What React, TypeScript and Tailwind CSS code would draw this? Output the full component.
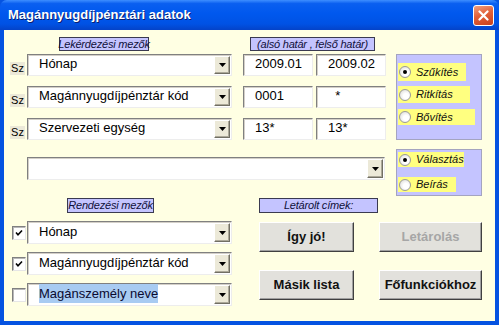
type ComboProps = { text?: string; className?: string; highlight?: boolean };

function DropArrow() {
  return (
    <div className="flex h-full w-[16px] items-center justify-center border border-t-white border-l-white border-b-[#716F64] border-r-[#716F64] bg-[#ECE9D8] shadow-[inset_-1px_-1px_0_#ACA899]">
      <svg width="7" height="4" viewBox="0 0 7 4">
        <path d="M0 0h7L3.5 4z" fill="#000" />
      </svg>
    </div>
  );
}

function Combo({ text, className = "", highlight }: ComboProps) {
  return (
    <div
      className={`flex items-stretch bg-white border border-t-[#808080] border-l-[#808080] border-b-[#EDEDED] border-r-[#EDEDED] p-[1px] shadow-[inset_1px_1px_0_#D4D0C8] ${className}`}
    >
      <div className="flex flex-1 items-center whitespace-nowrap pl-[10px] pb-[2px] text-[13px] text-black">
        {highlight ? <span className="bg-[#A8CBF2] text-[#0A0A30]">{text}</span> : text}
      </div>
      <DropArrow />
    </div>
  );
}

function Field({ text, className = "" }: { text: string; className?: string }) {
  return (
    <div
      className={`flex h-[22px] w-[70px] items-center bg-white pl-[11px] pb-[2px] text-[13px] text-black border border-t-[#808080] border-l-[#808080] border-b-[#EDEDED] border-r-[#EDEDED] shadow-[inset_1px_1px_0_#D4D0C8] ${className}`}
    >
      {text}
    </div>
  );
}

function Tag({ text, className = "" }: { text: string; className?: string }) {
  return (
    <div
      className={`flex items-center justify-center whitespace-nowrap border border-[#3A3A50] bg-[#C4C4FF] text-[11px] italic leading-none tracking-[-0.2px] text-[#10103A] ${className}`}
    >
      {text}
    </div>
  );
}

function Radio({ label, checked, className = "" }: { label: string; checked?: boolean; className?: string }) {
  return (
    <div className={`ml-[1px] flex items-center bg-[#FFFF80] ${className}`}>
      <span className="ml-[1px] flex h-[12px] w-[12px] items-center justify-center rounded-full border border-[#9A9A9A] bg-[radial-gradient(circle_at_60%_60%,#ffffff_30%,#D6D6D0)]">
        {checked && <span className="h-[4px] w-[4px] rounded-full bg-black" />}
      </span>
      <span className="ml-[5px] whitespace-nowrap text-[11px] italic leading-none text-[#101010]">{label}</span>
    </div>
  );
}

function Check({ checked }: { checked?: boolean }) {
  return (
    <div className="ml-[8px] flex h-[14px] w-[14px] items-center justify-center bg-white border border-t-[#808080] border-l-[#808080] border-b-[#E6E6E6] border-r-[#E6E6E6] shadow-[inset_1px_1px_0_#B8B8B8]">
      {checked && (
        <svg width="8" height="8" viewBox="0 0 8 8">
          <path d="M1 3.5 L3 5.8 L7 1.5" stroke="#000" strokeWidth="1.6" fill="none" />
        </svg>
      )}
    </div>
  );
}

function Btn({ text, className = "", disabled }: { text: string; className?: string; disabled?: boolean }) {
  return (
    <div
      className={`flex h-[30px] items-center justify-center bg-[#E2E1DC] border border-t-white border-l-white border-b-[#404040] border-r-[#404040] shadow-[inset_-1px_-1px_0_#A0A0A0] text-[13px] font-bold ${
        disabled ? "text-[#A6A6A6]" : "text-[#111]"
      } ${className}`}
    >
      {text}
    </div>
  );
}

const queryRows = [
  { label: "Hónap", a: "2009.01", b: "2009.02" },
  { label: "Magánnyugdíjpénztár kód", a: "0001", b: "  *" },
  { label: "Szervezeti egység", a: "13*", b: "13*" },
];

export default function App() {
  return (
    <div className="flex h-[325px] w-[499px] flex-col bg-[#0553E1] font-['Liberation_Sans',Arial,sans-serif]">
      {/* Title bar */}
      <div className="flex h-[30px] items-center rounded-t-[7px] bg-[linear-gradient(180deg,#3E8EFF_0%,#0A5FF0_12%,#0058EE_45%,#0052E4_80%,#0443C8_100%)] pl-[8px] pr-[5px]">
        <div className="flex-1 text-[13px] font-bold text-white [text-shadow:1px_1px_0_#0A1F70]">
          Magánnyugdíjpénztári adatok
        </div>
        <div className="flex h-[21px] w-[21px] items-center justify-center rounded-[3px] border border-white bg-[linear-gradient(160deg,#F0A080_0%,#E2603A_45%,#C8401C_100%)]">
          <svg width="11" height="11" viewBox="0 0 11 11">
            <path d="M1.5 1.5 L9.5 9.5 M9.5 1.5 L1.5 9.5" stroke="#fff" strokeWidth="2.2" strokeLinecap="round" />
          </svg>
        </div>
      </div>

      {/* Client area */}
      <div className="mx-[4px] mb-[4px] flex-1 bg-[#FFFFE3]">
        <div className="flex h-[166px]">
          {/* Query fields */}
          <div className="w-[388px]">
            <div className="mt-[7px] flex h-[14px]">
              <Tag text="Lekérdezési mezők" className="ml-[55px] w-[90px]" />
              <Tag text="(alsó határ , felső határ)" className="ml-[101px] w-[125px]" />
            </div>
            {queryRows.map((r, i) => (
              <div key={r.label} className={`flex h-[22px] ${i === 0 ? "mt-[3px]" : "mt-[10px]"}`}>
                <div className="mb-[1px] ml-[6px] flex h-[13px] w-[15px] items-center justify-center self-end bg-[#ECE9D8] text-[11px] leading-none text-black">
                  Sz
                </div>
                <Combo text={r.label} className="ml-[2px] w-[205px]" />
                <Field text={r.a} className="ml-[11px]" />
                <Field text={r.b} className="ml-[3px] whitespace-pre" />
              </div>
            ))}
            <Combo className="ml-[23px] mt-[17px] h-[23px] w-[358px]" />
          </div>

          {/* Option groups */}
          <div className="ml-[4px] w-[86px]">
            <div className="mt-[24px] flex h-[86px] flex-col border border-[#A4A4C0] bg-[#C4C4FF]">
              <Radio label="Szűkítés" checked className="mt-[8px] h-[18px] w-[68px]" />
              <Radio label="Ritkítás" className="mt-[5px] h-[17px] w-[72px]" />
              <Radio label="Bővítés" className="mt-[6px] h-[16px] w-[77px]" />
            </div>
            <div className="mt-[9px] flex h-[47px] flex-col border border-[#A4A4C0] bg-[#C4C4FF]">
              <Radio label="Választás" checked className="mt-[2px] h-[15px] w-[66px]" />
              <Radio label="Beírás" className="mt-[10px] h-[15px] w-[58px]" />
            </div>
          </div>
        </div>

        {/* Sort fields + buttons */}
        <div className="mt-[2px] flex h-[15px]">
          <Tag text="Rendezési mezők" className="ml-[63px] w-[87px]" />
          <Tag text="Letárolt címek:" className="ml-[105px] w-[119px]" />
        </div>
        <div className="flex">
          <div className="w-[228px]">
            {[
              { t: "Hónap", c: true },
              { t: "Magánnyugdíjpénztár kód", c: true },
              { t: "Magánszemély neve", c: false, h: true },
            ].map((r) => (
              <div key={r.t} className="mt-[8px] flex h-[23px] items-center">
                <Check checked={r.c} />
                <Combo text={r.t} highlight={r.h} className="ml-[1px] h-[23px] w-[205px]" />
              </div>
            ))}
          </div>
          <div className="ml-[27px] mt-[9px] grid grid-cols-[95px_103px] gap-x-[25px] gap-y-[18px] self-start">
            <Btn text="Így jó!" />
            <Btn text="Letárolás" disabled />
            <Btn text="Másik lista" />
            <Btn text="Főfunkciókhoz" />
          </div>
        </div>
      </div>
    </div>
  );
}
